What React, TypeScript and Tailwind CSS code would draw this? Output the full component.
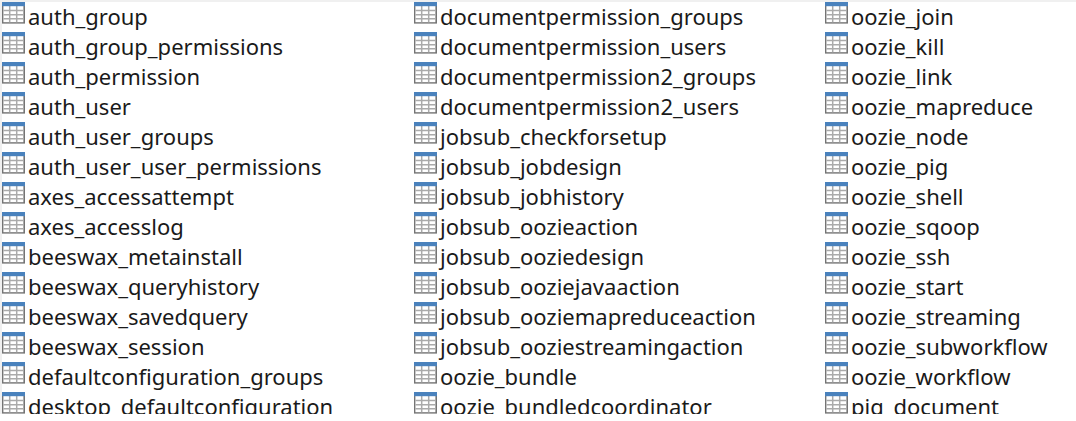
const columns: string[][] = [
  [
    'auth_group',
    'auth_group_permissions',
    'auth_permission',
    'auth_user',
    'auth_user_groups',
    'auth_user_user_permissions',
    'axes_accessattempt',
    'axes_accesslog',
    'beeswax_metainstall',
    'beeswax_queryhistory',
    'beeswax_savedquery',
    'beeswax_session',
    'defaultconfiguration_groups',
    'desktop_defaultconfiguration',
  ],
  [
    'documentpermission_groups',
    'documentpermission_users',
    'documentpermission2_groups',
    'documentpermission2_users',
    'jobsub_checkforsetup',
    'jobsub_jobdesign',
    'jobsub_jobhistory',
    'jobsub_oozieaction',
    'jobsub_ooziedesign',
    'jobsub_ooziejavaaction',
    'jobsub_ooziemapreduceaction',
    'jobsub_ooziestreamingaction',
    'oozie_bundle',
    'oozie_bundledcoordinator',
  ],
  [
    'oozie_join',
    'oozie_kill',
    'oozie_link',
    'oozie_mapreduce',
    'oozie_node',
    'oozie_pig',
    'oozie_shell',
    'oozie_sqoop',
    'oozie_ssh',
    'oozie_start',
    'oozie_streaming',
    'oozie_subworkflow',
    'oozie_workflow',
    'pig_document',
  ],
];

function TableIcon() {
  return (
    <svg className="shrink-0" width="23" height="22" viewBox="0 0 23 22" aria-hidden="true">
      <rect x="0" y="3" width="23" height="18.6" fill="#747474" />
      <rect x="1.4" y="4" width="20" height="16.2" fill="#ffffff" />
      <path d="M7.7 4V20.2M14.7 4V20.2M1.4 8.6H21.4M1.4 12.7H21.4M1.4 16.8H21.4" stroke="#aaaaaa" strokeWidth="1.5" />
      <rect x="0" y="0" width="23" height="4.2" fill="#4a82bd" />
    </svg>
  );
}

export default function App() {
  return (
    <main className="flex h-screen flex-col bg-white pb-[7px]">
      <div className="grid min-h-0 flex-1 grid-cols-[minmax(0,412fr)_minmax(0,411fr)_minmax(0,251fr)] overflow-hidden border-t-2 border-l-2 border-[#f0f0f0] font-['Noto_Sans',sans-serif] text-[22px] text-[#1a1a1a]">
        {columns.map((names) => (
          <ul key={names[0]}>
            {names.map((name) => (
              <li key={name} className="flex h-[30px] items-start gap-[3px] whitespace-nowrap">
                <TableIcon />
                <span className="leading-[28px]">{name}</span>
              </li>
            ))}
          </ul>
        ))}
      </div>
    </main>
  );
}
